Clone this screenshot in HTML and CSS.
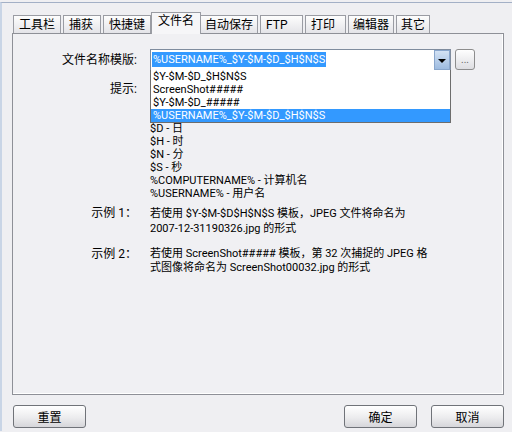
FILE: index.html
```html
<!DOCTYPE html>
<html lang="zh">
<head>
    <meta charset="UTF-8">
    <title>选项 - 文件名</title>
    <link rel="stylesheet" href="styles.css">
</head>
<body>

<div class="window">
    <div class="tabs">
        <span class="tab">工具栏</span>
        <span class="tab tab-capture">捕获</span>
        <span class="tab">快捷键</span>
        <span class="tab active">文件名</span>
        <span class="tab">自动保存</span>
        <span class="tab tab-ftp">FTP</span>
        <span class="tab tab-print">打印</span>
        <span class="tab">编辑器</span>
        <span class="tab">其它</span>
    </div>

    <div class="panel">
        <div class="row row-template">
            <label class="label">文件名称模版:</label>
            <div class="combo-wrap">
                <div class="combo">
                    <span class="combo-value">%USERNAME%_$Y-$M-$D_$H$N$S</span>
                    <span class="combo-arrow"></span>
                    <ul class="combo-list">
                        <li>$Y-$M-$D_$H$N$S</li>
                        <li>ScreenShot#####</li>
                        <li>$Y-$M-$D_#####</li>
                        <li class="selected">%USERNAME%_$Y-$M-$D_$H$N$S</li>
                    </ul>
                </div>
                <button class="browse">...</button>
            </div>
        </div>

        <div class="row row-hint">
            <span class="label">提示:</span>
            <!-- first lines ($Y, $M) sit under the open drop-down -->
            <ul class="hint-list">
                <li>$D - 日</li>
                <li>$H - 时</li>
                <li>$N - 分</li>
                <li>$S - 秒</li>
                <li>%COMPUTERNAME% - 计算机名</li>
                <li>%USERNAME% - 用户名</li>
            </ul>
        </div>

        <div class="row row-example">
            <span class="label">示例 1：</span>
            <p class="example-text">若使用 $Y-$M-$D$H$N$S 模板，JPEG 文件将命名为<br>2007-12-31190326.jpg 的形式</p>
        </div>

        <div class="row row-example second">
            <span class="label">示例 2：</span>
            <p class="example-text">若使用 ScreenShot##### 模板，第 32 次捕捉的 JPEG 格<br>式图像将命名为 ScreenShot00032.jpg 的形式</p>
        </div>
    </div>

    <div class="footer">
        <button class="btn">重置</button>
        <div class="footer-right">
            <button class="btn">确定</button>
            <button class="btn">取消</button>
        </div>
    </div>
</div>

</body>
</html>
```

FILE: styles.css
```css
body {
    margin: 0;
    background: #efeff2;
    font-family: Roboto, "Noto Sans CJK SC", sans-serif;
    font-size: 11px;
    color: #000;
}
.window {
    height: 429px;
    margin-top: 2px;
    border-top: 1px solid #a3b0c6;
    border-left: 2px solid #c9d5e6;
    padding: 9px 8px 0 10px;
    box-sizing: border-box;
}

/* tabs */
.tabs {
    display: flex;
    align-items: flex-end;
    height: 21px;
    padding-left: 1px;
    position: relative;
    z-index: 1;
    font-size: 12px;
}
.tab {
    height: 18px;
    line-height: 18px;
    padding: 0 5px;
    margin-right: 2px;
    border: 1px solid #9a9ca3;
    border-bottom: none;
    box-sizing: border-box;
    background: linear-gradient(#fdfdfd, #e4e4e8);
    white-space: nowrap;
}
.tab.active {
    height: 22px;
    line-height: 17px;
    margin: 0 0 -1px -2px;
    padding: 0 6px;
    background: #f6f6f8;
}
.tab.active + .tab {
    margin-left: -1px;
    padding: 0 4px;
}
.tab-capture {
    width: 38px;
}
.tab-ftp {
    width: 43px;
}
.tab-print {
    width: 41px;
}
.tab-print ~ .tab {
    padding: 0 4px;
}

/* panel */
.panel {
    height: 362px;
    box-sizing: border-box;
    border: 1px solid #8e9097;
    box-shadow: inset -1px -1px 0 #fff;
    background: #f0f0f3;
    padding-top: 15px;
}
.row {
    display: grid;
    grid-template-columns: 125px 1fr;
    column-gap: 12px;
}
.label {
    text-align: right;
    padding-right: 1px;
    font-size: 12px;
}
.row-template .label {
    line-height: 22px;
}
.combo-wrap {
    display: flex;
    gap: 4px;
}
.combo {
    position: relative;
    width: 301px;
    height: 22px;
    box-sizing: border-box;
    border: 1px solid #7f8c9e;
    background: #fff;
}
.combo-value {
    display: inline-block;
    margin: 2px 0 0 1px;
    padding: 0 1px;
    line-height: 15px;
    background: #3399ff;
    color: #fff;
}
.combo-arrow {
    position: absolute;
    top: 0;
    right: 0;
    width: 16px;
    height: 20px;
    box-sizing: border-box;
    border: 1px solid #89a6cc;
    background: linear-gradient(#d3e2f4, #9dbbe0);
}
.combo-arrow::after {
    content: "";
    position: absolute;
    left: 3px;
    top: 8px;
    border-left: 4px solid transparent;
    border-right: 4px solid transparent;
    border-top: 4px solid #000;
}
.combo-list {
    position: absolute;
    left: -1px;
    top: 20px;
    width: 301px;
    box-sizing: border-box;
    margin: 0;
    padding: 0;
    list-style: none;
    background: #fff;
    border: 1px solid #6d6d6d;
    border-top: none;
}
.combo-list li {
    height: 13px;
    line-height: 13px;
    padding-left: 2px;
    white-space: nowrap;
}
.combo-list li.selected {
    background: #3399ff;
    color: #fff;
}
.browse {
    width: 20px;
    height: 21px;
    padding: 0;
    border: 1px solid #8d8d8d;
    border-radius: 3px;
    background: linear-gradient(#fefefe, #dedee2);
    font-family: inherit;
    font-size: 10px;
    color: #666;
    line-height: 10px;
}

/* hint list */
.row-hint {
    margin-top: 12px;
    line-height: 13px;
}
.hint-list {
    margin: 0;
    padding: 39px 0 0;
    list-style: none;
}
.hint-list li {
    height: 13px;
    white-space: nowrap;
}

/* examples */
.row-example {
    margin-top: 6px;
    line-height: 15px;
}
.row-example.second {
    margin-top: 11px;
    line-height: 14px;
}
.example-text {
    margin: 0;
    white-space: nowrap;
}

/* footer */
.footer {
    display: flex;
    justify-content: space-between;
    padding: 10px 0 0 1px;
}
.footer-right {
    display: flex;
    gap: 14px;
}
.btn {
    width: 73px;
    height: 23px;
    padding: 0;
    border: 1px solid #707379;
    border-radius: 3px;
    background: linear-gradient(#ffffff, #ececee 55%, #d6d6da);
    font-family: inherit;
    font-size: 12px;
    color: #000;
}
```
